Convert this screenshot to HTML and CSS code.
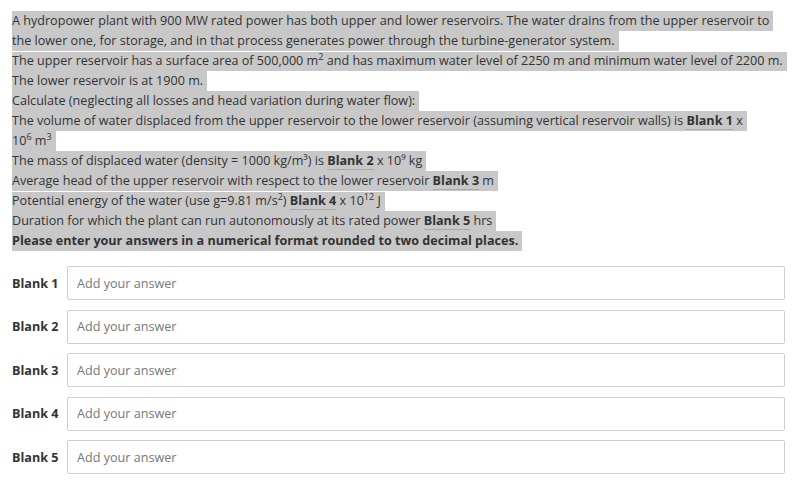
FILE: index.html
```html
<!DOCTYPE html>
<html lang="en">
<head>
<meta charset="utf-8">
<title>Hydropower question</title>
<link rel="stylesheet" href="styles.css">
</head>
<body>
<main class="page">
  <div class="question">
    <div class="line">A hydropower plant with 900 MW rated power has both upper and lower reservoirs. The water drains from the upper reservoir to</div>
    <div class="line">the lower one, for storage, and in that process generates power through the turbine-generator system.</div>
    <div class="line gap">The upper reservoir has a surface area of 500,000 m<sup>2</sup> and has maximum water level of 2250 m and minimum water level of 2200 m.</div>
    <div class="line">The lower reservoir is at 1900 m.</div>
    <div class="line">Calculate (neglecting all losses and head variation during water flow):</div>
    <div class="line">The volume of water displaced from the upper reservoir to the lower reservoir (assuming vertical reservoir walls) is <b class="blank">Blank 1</b> x</div>
    <div class="line">10<sup>6</sup> m<sup>3</sup></div>
    <div class="line">The mass of displaced water (density = 1000 kg/m³) is <b class="blank">Blank 2</b> x 10⁹ kg</div>
    <div class="line">Average head of the upper reservoir with respect to the lower reservoir <b class="blank">Blank 3</b> m</div>
    <div class="line gap">Potential energy of the water (use g=9.81 m/s<sup>2</sup>) <b class="blank">Blank 4</b> x 10<sup>12</sup> J</div>
    <div class="line">Duration for which the plant can run autonomously at its rated power <b class="blank">Blank 5</b> hrs</div>
    <div class="line"><b>Please enter your answers in a numerical format rounded to two decimal places.</b></div>
  </div>

  <div class="answers">
    <label class="row"><span class="label">Blank 1</span><input class="field" type="text" placeholder="Add your answer"></label>
    <label class="row"><span class="label">Blank 2</span><input class="field" type="text" placeholder="Add your answer"></label>
    <label class="row"><span class="label">Blank 3</span><input class="field" type="text" placeholder="Add your answer"></label>
    <label class="row"><span class="label">Blank 4</span><input class="field" type="text" placeholder="Add your answer"></label>
    <label class="row"><span class="label">Blank 5</span><input class="field" type="text" placeholder="Add your answer"></label>
  </div>
</main>
</body>
</html>
```

FILE: styles.css
```css
html, body {
  margin: 0;
  padding: 0;
  background: #ffffff;
}

body {
  font-family: "Open Sans", "Liberation Sans", sans-serif;
  font-size: 12.6px;
  color: #333333;
}

.page {
  padding: 11px 11px 0 12px;
}

.question {
  display: flex;
  flex-direction: column;
  align-items: flex-start;
}

.line {
  line-height: 20px;
  height: 20px;
  white-space: nowrap;
  background: #c8c8c8;
  padding-right: 4px;
}

.line.gap {
  background: linear-gradient(#ffffff 0 1px, #c8c8c8 1px);
}

.line b {
  font-weight: 700;
}

sup {
  font-size: 9px;
  line-height: 0;
  vertical-align: 5px;
}

.blank {
  border-bottom: 1px solid #b79acb;
}

.answers {
  margin-top: 15px;
  display: flex;
  flex-direction: column;
  gap: 9.5px;
}

.row {
  display: flex;
  align-items: center;
}

.label {
  width: 55px;
  flex: none;
  font-weight: 700;
  color: #333333;
}

.field {
  flex: 1;
  height: 34px;
  box-sizing: border-box;
  border: 1px solid #cfcfcf;
  border-radius: 2px;
  padding: 0 9px;
  font-family: "Open Sans", "Liberation Sans", sans-serif;
  font-size: 12.6px;
  color: #333333;
  background: #ffffff;
  outline: none;
}

.field::placeholder {
  color: #777777;
}
```
